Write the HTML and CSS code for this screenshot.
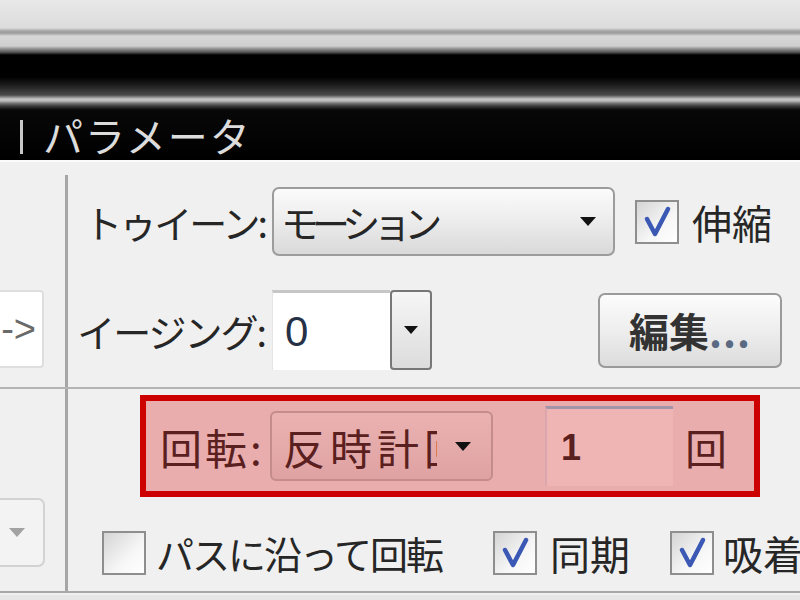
FILE: index.html
```html
<!DOCTYPE html>
<html lang="ja">
<head>
<meta charset="utf-8">
<title>プロパティ</title>
<link rel="stylesheet" href="styles.css">
</head>
<body>
<div class="chrome"></div>
<div class="titlebar">
  <div class="tab">
    <span class="tab-sep"></span>
    <span class="tab-label">パラメータ</span>
  </div>
</div>
<div class="panel">
  <div class="section upper">
    <div class="side">
      <div class="side-input">-&gt;</div>
    </div>
    <div class="main">
      <div class="row row-tween">
        <span class="label label-tween">トゥイーン:</span>
        <div class="select select-tween">
          <span class="select-text">モーション</span>
          <span class="arrow"></span>
        </div>
        <span class="checkbox cb-scale"><svg viewBox="0 0 40 40" width="40" height="40"><path d="M10 17 L18 32 L31 7" fill="none" stroke="#3a58b4" stroke-width="4.5" stroke-linecap="round" stroke-linejoin="round"/></svg></span>
        <span class="cb-label cb-label-scale">伸縮</span>
      </div>
      <div class="row row-ease">
        <span class="label label-ease">イージング:</span>
        <div class="combo">
          <div class="combo-input">0</div>
          <div class="combo-btn"><span class="arrow arrow-small"></span></div>
        </div>
        <button class="button">編集<span class="dots">...</span></button>
      </div>
    </div>
  </div>
  <div class="section lower">
    <div class="side">
      <div class="side-select"><span class="arrow arrow-light"></span></div>
    </div>
    <div class="main">
      <div class="highlight">
        <span class="hl-label">回転:</span>
        <div class="hl-select">
          <span class="hl-select-text">反時計回り</span>
          <span class="arrow"></span>
        </div>
        <div class="hl-input">1</div>
        <span class="hl-unit">回</span>
      </div>
      <div class="row row-checks">
        <span class="checkbox cb-path"></span>
        <span class="cb-label cb-label-path">パスに沿って回転</span>
        <span class="checkbox"><svg viewBox="0 0 40 40" width="40" height="40"><path d="M10 17 L18 32 L31 7" fill="none" stroke="#3a58b4" stroke-width="4.5" stroke-linecap="round" stroke-linejoin="round"/></svg></span>
        <span class="cb-label cb-label-sync">同期</span>
        <span class="checkbox"><svg viewBox="0 0 40 40" width="40" height="40"><path d="M10 17 L18 32 L31 7" fill="none" stroke="#3a58b4" stroke-width="4.5" stroke-linecap="round" stroke-linejoin="round"/></svg></span>
        <span class="cb-label cb-label-snap">吸着</span>
      </div>
    </div>
  </div>
</div>
</body>
</html>
```

FILE: styles.css
```css
* { box-sizing: border-box; }
html, body { margin: 0; padding: 0; }
body {
  width: 800px;
  height: 600px;
  overflow: hidden;
  background: #e6e6e6;
  font-family: "Noto Sans CJK JP", "Noto Sans", sans-serif;
  color: #262626;
}

/* window chrome */
.chrome {
  height: 55px;
  background: linear-gradient(to bottom,
    #e8e8e8 0, #dcdcdc 28px, #a4a4a4 31px, #9c9c9c 33px,
    #d6d6d6 36px, #d0d0d0 46px, #8e8e8e 49px, #5a5a5a 52px, #000 55px);
}
.titlebar {
  height: 105px;
  display: flex;
  align-items: flex-end;
  background: linear-gradient(to bottom,
    #000 0, #000 22px, #1c1c1c 30px, #4a4a4a 40px, #c4c4c4 44px,
    #bcbcbc 46px, #7a7a7a 48px, #3c3c3c 51px, #080808 55px, #000 100%);
}
.tab {
  height: 50px;
  display: flex;
  align-items: center;
  padding-left: 20px;
}
.tab-sep {
  width: 3px;
  height: 34px;
  background: #c8c8c8;
  margin-right: 20px;
  margin-top: 4px;
}
.tab-label {
  font-size: 40px;
  line-height: 50px;
  letter-spacing: 2px;
  color: #dcdcdc;
}

/* panel */
.panel {
  height: 435px;
  padding-top: 13px;
  border-top: 2px solid #fbfbfb;
  background: #f0f0f0;
}
.section { display: flex; }
.upper { height: 214px; border-bottom: 2px solid #b4b4b4; }
.lower { height: 204px; border-bottom: 2px solid #a8a8a8; }
.side {
  width: 68px;
  flex: none;
  border-right: 3px solid #a6a6a6;
}
.main {
  flex: 1;
  min-width: 0;
  overflow: hidden;
}

.side-input {
  margin-top: 115px;
  width: 44px;
  height: 78px;
  background: #fff;
  border: 2px solid #dedede;
  border-left: none;
  border-radius: 0 4px 4px 0;
  font-family: "Liberation Sans", sans-serif;
  font-size: 38px;
  color: #6a6a6a;
  display: flex;
  align-items: center;
  justify-content: flex-end;
  padding-right: 6px;
  overflow: hidden;
}
.side-select {
  margin-top: 109px;
  width: 45px;
  height: 69px;
  border: 2px solid #d2d2d2;
  border-left: none;
  border-radius: 0 7px 7px 0;
  background: #f3f3f3;
  display: flex;
  align-items: center;
  padding-left: 9px;
}

/* rows */
.row {
  display: flex;
  align-items: center;
  white-space: nowrap;
}
.label {
  flex: none;
  width: 197px;
  margin-right: 7px;
  text-align: right;
  font-size: 38px;
}
.label-tween { letter-spacing: -3px; }
.label-ease { letter-spacing: -2px; }

.row-tween { margin-top: 12px; height: 69px; }
.select {
  height: 69px;
  border: 2px solid #9c9c9c;
  border-radius: 7px;
  background: linear-gradient(#fbfbfb, #ececec 50%, #d9d9d9);
  display: flex;
  align-items: center;
  padding: 0 17px 0 7px;
}
.select-tween { width: 343px; flex: none; }
.select-text {
  flex: 1;
  font-size: 38px;
  letter-spacing: -7px;
}
.arrow {
  flex: none;
  width: 0;
  height: 0;
  border-left: 8px solid transparent;
  border-right: 8px solid transparent;
  border-top: 9px solid #111;
}
.arrow-small {
  border-left-width: 7px;
  border-right-width: 7px;
  border-top-width: 8px;
}
.arrow-light { border-top-color: #a2a2a2; }

.checkbox {
  flex: none;
  width: 44px;
  height: 44px;
  border: 2px solid #8e8e8e;
  background: linear-gradient(135deg, #d4d4d4, #f6f6f6 60%, #ffffff);
  display: flex;
  align-items: center;
  justify-content: center;
}
.cb-scale { margin-left: 20px; }
.cb-label { font-size: 40px; flex: none; }
.cb-label-scale { margin-left: 13px; }

.row-ease { margin-top: 34px; height: 80px; }
.combo { display: flex; height: 80px; flex: none; }
.combo-input {
  width: 118px;
  background: #fff;
  border-top: 3px solid #c6c6c6;
  border-left: 1px solid #e4e4e4;
  font-family: "Liberation Sans", sans-serif;
  font-size: 42px;
  color: #263046;
  padding-left: 12px;
  display: flex;
  align-items: center;
}
.combo-btn {
  width: 42px;
  border: 2px solid #777;
  border-radius: 4px;
  background: linear-gradient(#f6f6f6, #dcdcdc);
  display: flex;
  align-items: center;
  justify-content: center;
}
.button {
  flex: none;
  margin-left: 166px;
  width: 184px;
  height: 75px;
  padding: 0;
  border: 2px solid #9a9a9a;
  border-radius: 7px;
  background: linear-gradient(#fcfcfc, #eeeeee 50%, #dcdcdc);
  font-family: "Noto Sans CJK JP", sans-serif;
  font-size: 40px;
  font-weight: 700;
  color: #333;
  display: flex;
  align-items: center;
  justify-content: center;
}
.dots { color: #5a6a82; letter-spacing: 1px; }

/* highlighted rotation row */
.highlight {
  margin: 6px 0 0 72px;
  width: 620px;
  height: 102px;
  border: 6px solid #cc0000;
  background: #e9adad;
  display: flex;
  align-items: center;
  padding-left: 14px;
  color: #5a2020;
  white-space: nowrap;
}
.hl-label {
  flex: none;
  width: 110px;
  font-size: 42px;
  letter-spacing: 3px;
}
.hl-select {
  flex: none;
  width: 223px;
  height: 70px;
  border: 2px solid #c48c8c;
  border-radius: 6px;
  background: linear-gradient(#ebb2b2, #dfa2a2);
  display: flex;
  align-items: center;
  padding: 0 20px 0 11px;
}
.hl-select-text {
  width: 154px;
  overflow: hidden;
  font-size: 42px;
  letter-spacing: 5px;
  margin-right: 18px;
}
.hl-input {
  flex: none;
  margin-left: 52px;
  width: 128px;
  height: 80px;
  background: #efb4b4;
  border-top: 3px solid #a494aa;
  border-left: 2px solid #dca6ae;
  font-family: "Liberation Sans", sans-serif;
  font-size: 36px;
  font-weight: 700;
  padding-left: 14px;
  display: flex;
  align-items: center;
}
.hl-unit {
  flex: none;
  margin-left: 12px;
  font-size: 42px;
}

/* bottom checkbox row */
.row-checks { margin-top: 33px; height: 45px; }
.cb-path { margin-left: 34px; }
.cb-label-path {
  width: 347px;
  padding-left: 10px;
  font-size: 38px;
  letter-spacing: -2px;
}
.cb-label-sync {
  width: 133px;
  padding-left: 13px;
}
.cb-label-snap { padding-left: 9px; }
```
